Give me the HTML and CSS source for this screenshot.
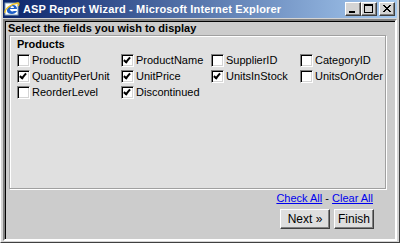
FILE: index.html
```html
<!DOCTYPE html>
<html>
<head>
<meta charset="utf-8">
<link rel="stylesheet" href="styles.css">
</head>
<body>
<div class="window">
  <div class="titlebar">
    <svg class="ie-icon" width="16" height="16" viewBox="0 0 16 16">
      <rect x="1" y="2" width="13" height="12" fill="#ffffff" stroke="#7f9db9" stroke-width="1"/>
      <path d="M3 10 C3 6 6 4 9 4 C12 4 13 6 13 8 L6 8 C6 10 8 11 10 10 L13 10 C12 12 10 13 8 13 C5 13 3 12 3 10 Z" fill="#1e5fc8"/>
      <path d="M6.5 7 L10 7 C10 5.6 8.8 5.2 8.2 5.2 C7.4 5.2 6.6 5.8 6.5 7 Z" fill="#ffffff"/>
      <path d="M1 12 C0 9 6 3 14 2 C15 2 15.5 3 14 5" fill="none" stroke="#f0c020" stroke-width="1.3"/>
    </svg>
    <span class="title">ASP Report Wizard - Microsoft Internet Explorer</span>
    <div class="tbuttons">
      <span class="tbtn"><svg width="14" height="12" viewBox="0 0 14 12"><rect x="3" y="8" width="6" height="2" fill="#000"/></svg></span><span class="tbtn"><svg width="14" height="12" viewBox="0 0 14 12"><rect x="2.5" y="1.5" width="8" height="8" fill="none" stroke="#000" stroke-width="1"/><rect x="2" y="1" width="9" height="2" fill="#000"/></svg></span><span class="tbtn close"><svg width="14" height="12" viewBox="0 0 14 12"><path d="M3 2 L10 9 M10 2 L3 9 M4 2 L11 9 M11 2 L4 9" stroke="#000" stroke-width="1"/></svg></span>
    </div>
  </div>
  <div class="client">
    <div class="content">
      <div class="heading">Select the fields you wish to display</div>
      <div class="panel">
        <div class="legend">Products</div>
        <div class="fields">
          <label class="field"><span class="cb"></span>ProductID</label>
          <label class="field"><span class="cb on"></span>ProductName</label>
          <label class="field"><span class="cb"></span>SupplierID</label>
          <label class="field"><span class="cb"></span>CategoryID</label>
          <label class="field"><span class="cb on"></span>QuantityPerUnit</label>
          <label class="field"><span class="cb on"></span>UnitPrice</label>
          <label class="field"><span class="cb on"></span>UnitsInStock</label>
          <label class="field"><span class="cb"></span>UnitsOnOrder</label>
          <label class="field"><span class="cb"></span>ReorderLevel</label>
          <label class="field"><span class="cb on"></span>Discontinued</label>
        </div>
      </div>
      <div class="links"><a href="#">Check All</a> - <a href="#">Clear All</a></div>
      <div class="actions">
        <button class="btn next">Next »</button>
        <button class="btn finish">Finish</button>
      </div>
    </div>
  </div>
</div>
</body>
</html>
```
FILE: styles.css
```css
html, body {
  margin: 0;
  padding: 0;
  width: 400px;
  height: 243px;
  overflow: hidden;
  background: #d4d4d4;
}
.window {
  box-sizing: border-box;
  width: 400px;
  height: 243px;
  padding: 0 2px 1px 2px;
  background: #d4d4d4;
  border-left: 1px solid #ffffff;
  border-right: 1px solid #404040;
  border-bottom: 1px solid #404040;
  display: flex;
  flex-direction: column;
  font-family: "Liberation Sans", Arial, sans-serif;
}
.titlebar {
  height: 18px;
  flex: none;
  display: flex;
  align-items: center;
  background: linear-gradient(to right, #0a246a, #a6caf0);
  color: #fff;
}
.ie-icon { margin-left: 1px; flex: none; }
.title {
  margin-left: 3px;
  font-size: 11px;
  font-weight: bold;
  letter-spacing: 0.17px;
  white-space: nowrap;
  flex: 1;
}
.tbuttons { display: flex; margin-right: 2px; }
.tbtn {
  box-sizing: border-box;
  width: 16px;
  height: 14px;
  background: #d4d4d4;
  border: 1px solid;
  border-color: #fff #404040 #404040 #fff;
  box-shadow: inset -1px -1px 0 #808080;
  display: flex;
  align-items: flex-start;
  justify-content: flex-start;
}
.tbtn.close { margin-left: 2px; }
.client {
  flex: 1;
  margin-top: 1px;
  border: 2px solid;
  border-color: #808080 #ffffff #ffffff #808080;
  box-shadow: inset 1px 1px 0 #000000;
  background: #cccccc;
  display: flex;
}
.content {
  flex: 1;
  min-width: 0;
  padding: 1px 9px 0 3px;
  font-size: 11px;
  color: #000;
}
.heading {
  font-weight: bold;
  line-height: 12px;
  height: 13px;
}
.panel {
  margin-left: 1px;
  height: 150px;
  background: #e0e0e0;
  border: 1px solid #a0a0a0;
  box-shadow: inset 1px 1px 0 #ffffff, 1px 1px 0 #ffffff;
  padding: 2px 0 0 7px;
}
.legend {
  font-weight: bold;
  line-height: 13px;
}
.fields {
  margin-top: 3px;
  display: grid;
  grid-template-columns: 104px 90px 89px auto;
  row-gap: 3px;
}
.field {
  display: flex;
  align-items: center;
  height: 13px;
  white-space: nowrap;
  line-height: 13px;
}
.cb {
  box-sizing: border-box;
  width: 13px;
  height: 13px;
  flex: none;
  margin-right: 2px;
  background: #fff;
  border: 1px solid;
  border-color: #808080 #ffffff #ffffff #808080;
  box-shadow: inset 1px 1px 0 #000, inset -1px -1px 0 #d4d4d4;
  position: relative;
}
.cb.on::after {
  content: "";
  position: absolute;
  left: 3px;
  top: 1px;
  width: 2px;
  height: 5px;
  border: solid #000;
  border-width: 0 2px 2px 0;
  transform: rotate(40deg);
}
.links {
  margin-top: 3px;
  text-align: right;
  padding-right: 13px;
  line-height: 13px;
}
.links a { color: #0000ee; }
.actions {
  margin-top: 4px;
  display: flex;
  justify-content: flex-end;
  gap: 4px;
  padding-right: 12px;
}
.btn {
  box-sizing: border-box;
  height: 20px;
  padding: 0;
  font-family: "Liberation Sans", Arial, sans-serif;
  font-size: 12px;
  color: #000;
  background: #dedede;
  border: 1px solid;
  border-color: #ffffff #404040 #404040 #ffffff;
  box-shadow: inset -1px -1px 0 #808080;
}
.next { width: 50px; }
.finish { width: 40px; }
```
